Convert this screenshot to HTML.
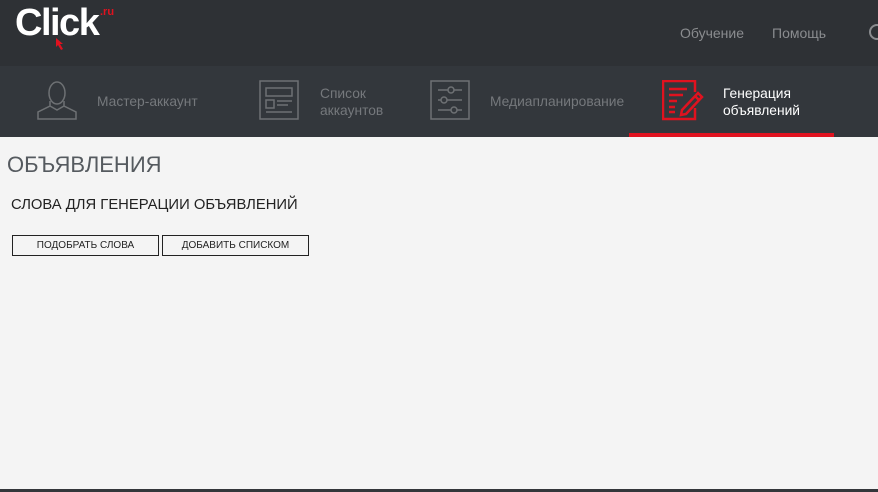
<!DOCTYPE html>
<html><head><meta charset="utf-8"><style>
*{margin:0;padding:0;box-sizing:border-box}
body{width:878px;height:492px;overflow:hidden;background:#f4f4f4;font-family:"Liberation Sans","DejaVu Sans",sans-serif;position:relative}
.top{position:absolute;left:0;top:0;width:878px;height:66px;background:#2e3135}
.nav{position:absolute;left:0;top:66px;width:878px;height:71px;background:#33373c}
.t{position:absolute;color:#8a8c8f;font-size:14px;white-space:nowrap}
.n{position:absolute;color:#75787c;font-size:13.8px;line-height:17px}
</style></head><body>
<div class="top">
 <div style="position:absolute;left:15px;top:2px;color:#fff;font-weight:bold;font-size:38px;letter-spacing:-1.5px;font-family:'Liberation Sans',sans-serif">Click</div>
 <div style="position:absolute;left:100px;top:6px;color:#e0121f;font-size:11px;font-weight:bold">.ru</div>
 <svg style="position:absolute;left:55px;top:37px" width="10" height="14"><path d="M1 1 L1 10 L3 8 L6 13 L8 12 L5 7 L8 7 Z" fill="#e0121f"/></svg>
 <div class="t" style="left:680px;top:25px">Обучение</div>
 <div class="t" style="left:772px;top:25px">Помощь</div>
 <div style="position:absolute;left:869px;top:24px;width:16px;height:16px;border:2px solid #8a8c8f;border-radius:50%"></div>
</div>
<div class="nav">
 <svg style="position:absolute;left:36px;top:14px" width="42" height="42" fill="none" stroke="#6e7174" stroke-width="1.5"><ellipse cx="21" cy="13" rx="8" ry="11"/><path d="M14 21 L14 26 L2 32 L2 39 L40 39 L40 32 L28 26 L28 21 M14 26 L21 30 L28 26"/></svg>
 <div class="n" style="left:97px;top:27px">Мастер-аккаунт</div>
 <svg style="position:absolute;left:259px;top:14px" width="40" height="40" fill="none" stroke="#6e7174" stroke-width="1.5"><rect x="1" y="1" width="38" height="38"/><rect x="7" y="8" width="26" height="8"/><rect x="7" y="20" width="8" height="8"/><path d="M18 21h15M18 25h11M7 32h26"/></svg>
 <div class="n" style="left:320px;top:19px">Список<br>аккаунтов</div>
 <svg style="position:absolute;left:430px;top:14px" width="40" height="40" fill="none" stroke="#6e7174" stroke-width="1.5"><rect x="1" y="1" width="38" height="38"/><path d="M8 10h24M8 20h24M8 30h24"/><circle cx="21" cy="10" r="3" fill="#33373c"/><circle cx="14" cy="20" r="3" fill="#33373c"/><circle cx="24" cy="30" r="3" fill="#33373c"/></svg>
 <div class="n" style="left:490px;top:27px">Медиапланирование</div>
 <svg style="position:absolute;left:662px;top:14px" width="44" height="42" fill="none" stroke="#e0121f" stroke-width="2.5"><path d="M33 12 V1 H1 V39 H33 V28"/><path d="M7 9h18M7 15h14M7 21h8M7 27h6M7 32h6"/><path d="M20 30 L36 13 L40 17 L24 34 L19 35 Z M33 16 L37 20"/></svg>
 <div class="n" style="left:723px;top:19px;color:#fff">Генерация<br>объявлений</div>
 <div style="position:absolute;left:629px;top:67px;width:205px;height:4px;background:#e0121f"></div>
</div>
<div style="position:absolute;left:7px;top:152px;font-size:22px;color:#555a5f">ОБЪЯВЛЕНИЯ</div>
<div style="position:absolute;left:11px;top:197px;font-size:14.8px;color:#222">СЛОВА ДЛЯ ГЕНЕРАЦИИ ОБЪЯВЛЕНИЙ</div>
<div style="position:absolute;left:12px;top:235px;width:147px;height:21px;border:1px solid #222;font-size:10px;color:#222;text-align:center;line-height:19px">ПОДОБРАТЬ СЛОВА</div>
<div style="position:absolute;left:162px;top:235px;width:147px;height:21px;border:1px solid #222;font-size:10px;color:#222;text-align:center;line-height:19px">ДОБАВИТЬ СПИСКОМ</div>
<div style="position:absolute;left:0;top:489px;width:878px;height:3px;background:#33363a"></div>
</body></html>
